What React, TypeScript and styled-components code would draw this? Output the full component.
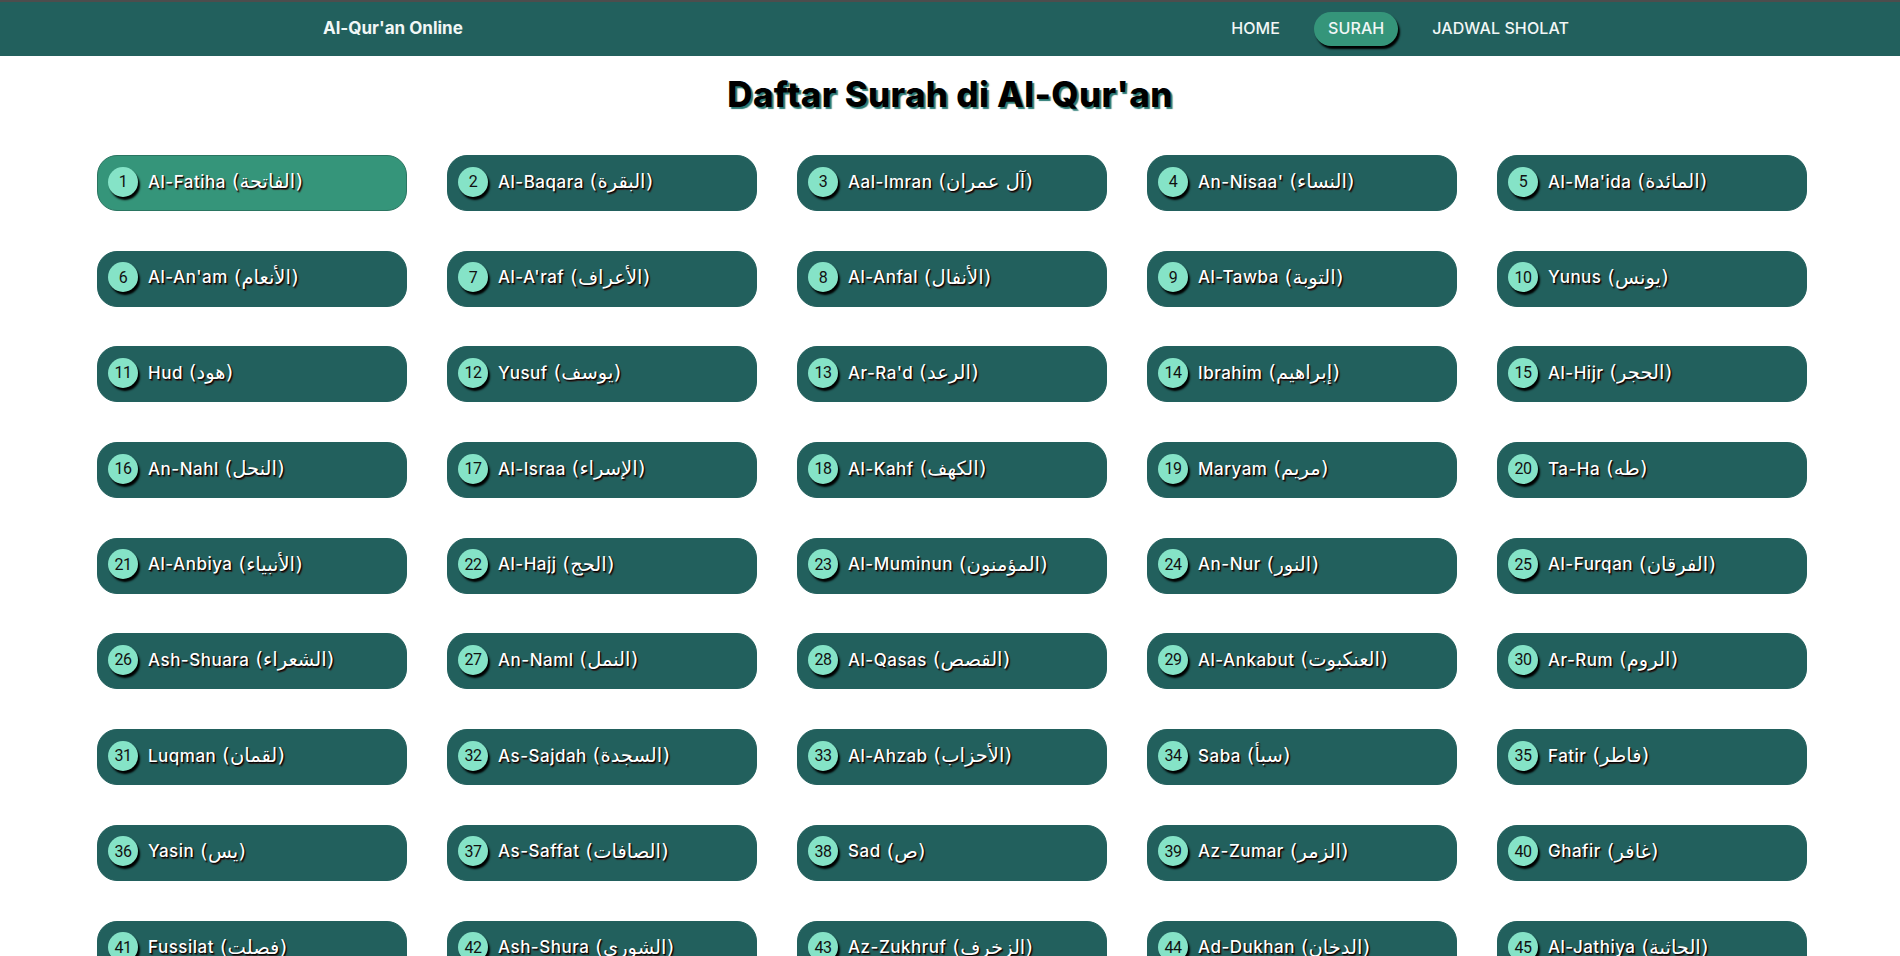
import React from "react";
import styled, { createGlobalStyle } from "styled-components";

const GlobalStyle = createGlobalStyle`
  body {
    margin: 0;
    background: #ffffff;
    font-family: Inter, "DejaVu Sans", sans-serif;
  }
`;

const Navbar = styled.nav`
  height: 54px;
  border-top: 2px solid #4d4d4d;
  background-color: #22605d;
  display: flex;
  align-items: center;
  justify-content: space-between;
  padding: 0 0 0 323px;
  color: #f1f7f6;
`;

const Brand = styled.div`
  font-size: 17px;
  font-weight: 700;
  padding-bottom: 2px;
`;

const Menu = styled.ul`
  list-style: none;
  margin: 0;
  padding: 0;
  display: flex;
  align-items: center;
  gap: 34px;
  margin-right: 331px;
`;

const MenuItem = styled.li<{ $active?: boolean }>`
  font-size: 16px;
  font-weight: 500;
  letter-spacing: 0.1px;
  padding: 0 ${(p) => (p.$active ? "14px" : "0")} 2px;
  box-sizing: border-box;
  height: 34px;
  display: flex;
  align-items: center;
  border-radius: 17px;
  background-color: ${(p) => (p.$active ? "#35957a" : "transparent")};
  box-shadow: ${(p) => (p.$active ? "2px 3px 2px #000" : "none")};
  cursor: pointer;
`;

const Title = styled.h1`
  margin: 18px 0 41px;
  line-height: 40px;
  text-align: center;
  font-size: 35px;
  font-weight: 800;
  letter-spacing: 0.3px;
  color: #000;
  text-shadow: 2px 2px 1px #2b7a74;
`;

const Grid = styled.div`
  display: grid;
  grid-template-columns: repeat(5, 310px);
  column-gap: 40px;
  row-gap: 39.7px;
  padding: 0 0 40px 97px;
`;

const Card = styled.a<{ $active?: boolean }>`
  height: 56px;
  box-sizing: border-box;
  border-radius: 20px;
  border: 1px solid ${(p) => (p.$active ? "#2a7561" : "#22605d")};
  background-color: ${(p) => (p.$active ? "#35957a" : "#22605d")};
  display: flex;
  align-items: center;
  gap: 10px;
  padding: 0 0 3px 10px;
  text-decoration: none;
  cursor: pointer;
`;

const Badge = styled.span`
  width: 30px;
  height: 30px;
  flex-shrink: 0;
  border-radius: 50%;
  background-color: #85e3c7;
  color: #111;
  box-shadow: 2px 3px 2px #000;
  display: flex;
  align-items: center;
  justify-content: center;
  font-family: Roboto, "Liberation Sans", sans-serif;
  font-size: 16px;
  letter-spacing: -0.5px;
`;

const Name = styled.span`
  color: #fff;
  font-size: 17px;
  font-weight: 500;
  letter-spacing: 0.5px;
  text-shadow: 1px 1px 1px #000, 1.5px 1.5px 1px rgba(60, 0, 0, 0.6);
  white-space: nowrap;
  display: flex;
  align-items: center;
  gap: 6px;
`;

const Arabic = styled.span`
  font-family: "DejaVu Sans", sans-serif;
  font-size: 19.5px;
  letter-spacing: 0;
  font-weight: 400;
`;

const surahs: [string, string][] = [
  ["Al-Fatiha", "الفاتحة"],
  ["Al-Baqara", "البقرة"],
  ["Aal-Imran", "آل عمران"],
  ["An-Nisaa'", "النساء"],
  ["Al-Ma'ida", "المائدة"],
  ["Al-An'am", "الأنعام"],
  ["Al-A'raf", "الأعراف"],
  ["Al-Anfal", "الأنفال"],
  ["Al-Tawba", "التوبة"],
  ["Yunus", "يونس"],
  ["Hud", "هود"],
  ["Yusuf", "يوسف"],
  ["Ar-Ra'd", "الرعد"],
  ["Ibrahim", "إبراهيم"],
  ["Al-Hijr", "الحجر"],
  ["An-Nahl", "النحل"],
  ["Al-Israa", "الإسراء"],
  ["Al-Kahf", "الكهف"],
  ["Maryam", "مريم"],
  ["Ta-Ha", "طه"],
  ["Al-Anbiya", "الأنبياء"],
  ["Al-Hajj", "الحج"],
  ["Al-Muminun", "المؤمنون"],
  ["An-Nur", "النور"],
  ["Al-Furqan", "الفرقان"],
  ["Ash-Shuara", "الشعراء"],
  ["An-Naml", "النمل"],
  ["Al-Qasas", "القصص"],
  ["Al-Ankabut", "العنكبوت"],
  ["Ar-Rum", "الروم"],
  ["Luqman", "لقمان"],
  ["As-Sajdah", "السجدة"],
  ["Al-Ahzab", "الأحزاب"],
  ["Saba", "سبأ"],
  ["Fatir", "فاطر"],
  ["Yasin", "يس"],
  ["As-Saffat", "الصافات"],
  ["Sad", "ص"],
  ["Az-Zumar", "الزمر"],
  ["Ghafir", "غافر"],
  ["Fussilat", "فصلت"],
  ["Ash-Shura", "الشورى"],
  ["Az-Zukhruf", "الزخرف"],
  ["Ad-Dukhan", "الدخان"],
  ["Al-Jathiya", "الجاثية"],
];

const App = () => {
  return (
    <>
      <GlobalStyle />
      <Navbar>
        <Brand>Al-Qur'an Online</Brand>
        <Menu>
          <MenuItem>HOME</MenuItem>
          <MenuItem $active>SURAH</MenuItem>
          <MenuItem>JADWAL SHOLAT</MenuItem>
        </Menu>
      </Navbar>
      <Title>Daftar Surah di Al-Qur'an</Title>
      <Grid>
        {surahs.map(([latin, arab], i) => (
          <Card key={latin} $active={i === 0}>
            <Badge>{i + 1}</Badge>
            <Name>
              {latin}
              <Arabic>({arab})</Arabic>
            </Name>
          </Card>
        ))}
      </Grid>
    </>
  );
};

export default App;
